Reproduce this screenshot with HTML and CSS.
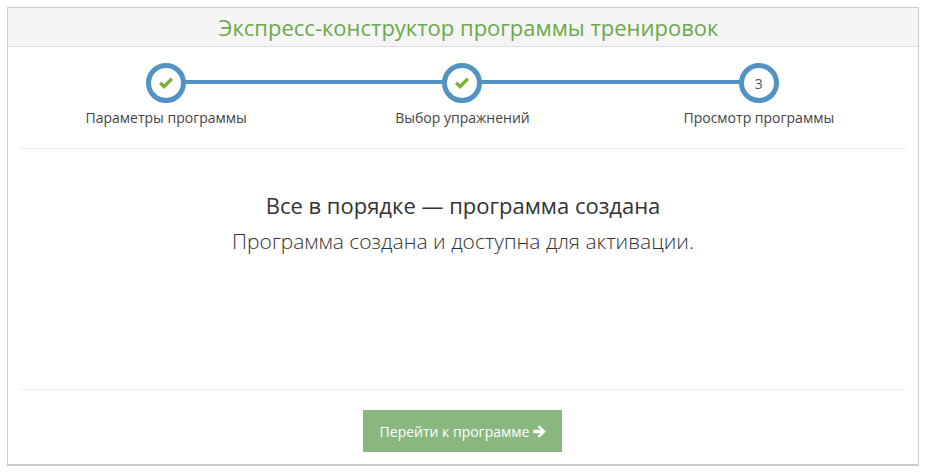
FILE: index.html
```html
<!DOCTYPE html>
<html lang="ru">
<head>
<meta charset="utf-8">
<title>Экспресс-конструктор программы тренировок</title>
<link rel="stylesheet" href="styles.css">
</head>
<body>
<main class="panel">
  <h1 class="panel-title">Экспресс-конструктор программы тренировок</h1>
  <div class="panel-body">
    <ol class="steps">
      <li class="step step-linked">
        <span class="step-circle">
          <svg class="check" viewBox="0 0 16 13" width="16" height="13"><path d="M1 7 L3.4 4.6 L6 7.2 L12.6 0.6 L15 3 L6 12 Z" fill="#7ab32e"/></svg>
        </span>
        <span class="step-label">Параметры программы</span>
      </li>
      <li class="step step-linked">
        <span class="step-circle">
          <svg class="check" viewBox="0 0 16 13" width="16" height="13"><path d="M1 7 L3.4 4.6 L6 7.2 L12.6 0.6 L15 3 L6 12 Z" fill="#7ab32e"/></svg>
        </span>
        <span class="step-label">Выбор упражнений</span>
      </li>
      <li class="step">
        <span class="step-circle">3</span>
        <span class="step-label">Просмотр программы</span>
      </li>
    </ol>
    <section class="message">
      <h2 class="message-title">Все в порядке — программа создана</h2>
      <p class="message-text">Программа создана и доступна для активации.</p>
    </section>
    <div class="actions">
      <a class="button" href="#">Перейти к программе
        <svg class="arrow" viewBox="0 0 13 13" width="13" height="13"><path d="M6.4 0.2 L12.8 6.5 L6.4 12.8 L4.6 11 L7.6 8.3 L0.2 8.3 L0.2 4.7 L7.6 4.7 L4.6 2 Z" fill="#fff"/></svg>
      </a>
    </div>
  </div>
</main>
</body>
</html>
```
FILE: styles.css
```css
* { box-sizing: border-box; }
html, body { margin: 0; padding: 0; background: #fff; }
body {
  padding: 7px 6px 0 7px;
  font-family: "Open Sans", "Noto Sans", sans-serif;
  color: #333;
}
.panel {
  height: 459px;
  border: 1px solid #ccc;
  border-bottom-width: 2px;
  display: flex;
  flex-direction: column;
}
.panel-title {
  margin: 0;
  height: 39px;
  padding-left: 11px;
  background: #f5f5f5;
  border-bottom: 1px solid #ddd;
  color: #6aaa4a;
  font-size: 22px;
  font-weight: 400;
  line-height: 38px;
  text-align: center;
}
.panel-body {
  flex: 1;
  padding: 0 12px;
  display: flex;
  flex-direction: column;
}
.steps {
  list-style: none;
  margin: 0 -1px 0 -2px;
  padding: 16px 0 21px;
  display: grid;
  grid-template-columns: repeat(3, 1fr);
  position: relative;
}
.steps::after {
  content: "";
  position: absolute;
  left: 2px;
  right: 1px;
  bottom: 0;
  height: 1px;
  background: #eee;
}
.step {
  position: relative;
  display: flex;
  flex-direction: column;
  align-items: center;
}
.step-linked::after {
  content: "";
  position: absolute;
  left: 50%;
  width: 100%;
  top: 17px;
  height: 4px;
  background: #5193c3;
}
.step-circle {
  position: relative;
  z-index: 1;
  width: 40px;
  height: 40px;
  border: 5px solid #5193c3;
  border-radius: 50%;
  background: #fff;
  display: flex;
  align-items: center;
  justify-content: center;
  font-size: 14px;
  color: #555;
}
.step-label {
  margin-top: 5px;
  font-size: 14px;
  line-height: 20px;
  color: #444;
}
.message {
  flex: 1;
  text-align: center;
  padding-top: 41px;
  border-bottom: 1px solid #eee;
}
.message-title {
  margin: 0;
  font-size: 22px;
  font-weight: 400;
  line-height: 30px;
  color: #333;
}
.message-text {
  margin: 7px 0 0;
  font-size: 21px;
  font-weight: 300;
  line-height: 28px;
  color: #333;
}
.actions {
  padding: 20px 1px 12px 0;
  display: flex;
  justify-content: center;
}
.button {
  width: 199px;
  height: 42px;
  padding-left: 1px;
  background: #88b87f;
  color: #fff;
  font-size: 14px;
  text-decoration: none;
  display: flex;
  align-items: center;
  justify-content: center;
  gap: 4px;
}
.arrow { flex: none; }
```
